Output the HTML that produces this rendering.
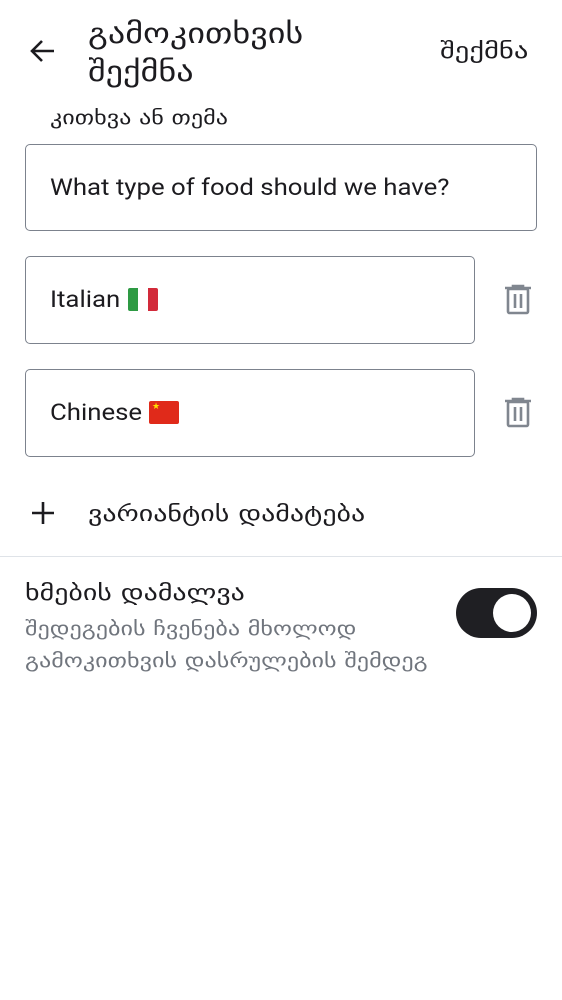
<!DOCTYPE html>
<html><head><meta charset="utf-8"><style>
body{margin:0;width:562px;height:1000px;background:#fff;position:relative;font-family:"Roboto","Liberation Sans","DejaVu Sans",sans-serif;color:#1c1b1f;overflow:hidden}
.a{position:absolute}
.box{position:absolute;border:1.5px solid #7c828d;border-radius:5px;box-sizing:border-box}
.t{position:absolute;font-size:22px;white-space:nowrap;transform-origin:0 0}
.e{font-size:23px;transform:scaleX(1.12)}
.g{font-family:'DejaVu Sans',sans-serif;transform:scaleX(1.27)}
</style></head><body>
<svg class="a" style="left:28px;top:36px" width="30" height="30" viewBox="0 0 30 30"><path d="M26 15H5M14 5L4 15L14 25" stroke="#1c1b1f" stroke-width="2.6" fill="none"/></svg>
<div class="t g" style="left:88px;top:15px;font-size:28px;line-height:38px;transform:scaleX(1.22)">გამოკითხვის<br>შექმნა</div>
<div class="t g" style="left:440px;top:39px;font-size:22px;transform:scaleX(1.3)">შექმნა</div>
<div class="t g" style="left:50px;top:107px;font-size:19px">კითხვა ან თემა</div>
<div class="box" style="left:25px;top:144px;width:512px;height:87px"></div>
<div class="t e" style="left:50px;top:174px">What type of food should we have?</div>
<div class="box" style="left:25px;top:256px;width:450px;height:88px"></div>
<div class="t e" style="left:50px;top:286px">Italian</div>
<div class="a" style="left:128px;top:288px;width:30px;height:23px;background:linear-gradient(90deg,#2e9a44 33%,#fff 33%,#fff 66%,#d22a3a 66%);border-radius:2px"></div>
<div class="box" style="left:25px;top:369px;width:450px;height:88px"></div>
<div class="t e" style="left:50px;top:399px">Chinese</div>
<div class="a" style="left:149px;top:401px;width:30px;height:23px;background:#e02a1a;border-radius:2px"><span style="position:absolute;left:3px;top:1px;color:#ffde00;font-size:9px">★</span></div>
<svg class="a" style="left:503px;top:284px" width="30" height="32" viewBox="0 0 30 32"><g fill="none" stroke="#80868f" stroke-width="2.6"><path d="M2 4H28M10 4V2H20V4"/><rect x="5" y="5" width="20" height="24" rx="1.5"/><path d="M12 10V24M18 10V24"/></g></svg>
<svg class="a" style="left:503px;top:397px" width="30" height="32" viewBox="0 0 30 32"><g fill="none" stroke="#80868f" stroke-width="2.6"><path d="M2 4H28M10 4V2H20V4"/><rect x="5" y="5" width="20" height="24" rx="1.5"/><path d="M12 10V24M18 10V24"/></g></svg>
<svg class="a" style="left:31px;top:501px" width="24" height="24" viewBox="0 0 24 24"><path d="M12 1V23M1 12H23" stroke="#1c1b1f" stroke-width="2.6"/></svg>
<div class="t g" style="left:88px;top:502px;font-size:22px">ვარიანტის დამატება</div>
<div class="a" style="left:0;top:556px;width:562px;height:1px;background:#dfe3e8"></div>
<div class="t g" style="left:25px;top:581px;font-size:22px">ხმების დამალვა</div>
<div class="t g" style="left:25px;top:613px;font-size:19px;line-height:32px;color:#70757d">შედეგების ჩვენება მხოლოდ<br>გამოკითხვის დასრულების შემდეგ</div>
<div class="a" style="left:456px;top:588px;width:81px;height:50px;border-radius:25px;background:#1f1f23"></div>
<div class="a" style="left:493px;top:594px;width:38px;height:38px;border-radius:50%;background:#fff"></div>
</body></html>
